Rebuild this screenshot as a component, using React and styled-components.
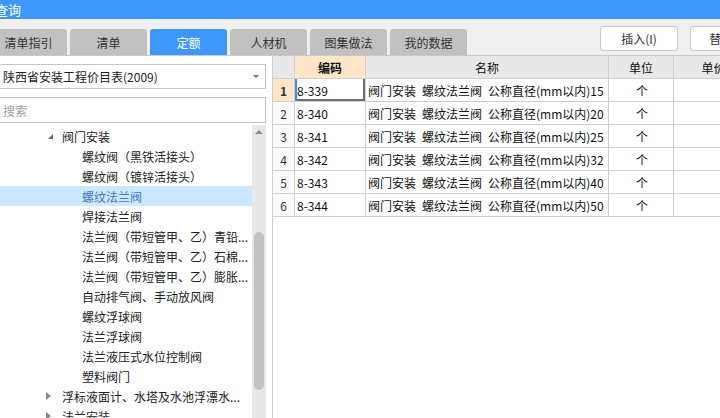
import styled, { createGlobalStyle } from "styled-components";

const GlobalStyle = createGlobalStyle`
  html, body {
    margin: 0;
    padding: 0;
    background: #ffffff;
    overflow: hidden;
  }
  body {
    font-family: "Noto Sans CJK SC", "Noto Sans", sans-serif;
  }
`;

const treeItems = [
  { level: 1, text: "阀门安装", arrow: "open" },
  { level: 2, text: "螺纹阀（黑铁活接头）" },
  { level: 2, text: "螺纹阀（镀锌活接头）" },
  { level: 2, text: "螺纹法兰阀", selected: true },
  { level: 2, text: "焊接法兰阀" },
  { level: 2, text: "法兰阀（带短管甲、乙）青铅..." },
  { level: 2, text: "法兰阀（带短管甲、乙）石棉..." },
  { level: 2, text: "法兰阀（带短管甲、乙）膨胀..." },
  { level: 2, text: "自动排气阀、手动放风阀" },
  { level: 2, text: "螺纹浮球阀" },
  { level: 2, text: "法兰浮球阀" },
  { level: 2, text: "法兰液压式水位控制阀" },
  { level: 2, text: "塑料阀门" },
  { level: 1, text: "浮标液面计、水塔及水池浮漂水...", arrow: "closed" },
  { level: 1, text: "法兰安装", arrow: "closed" },
];

const rows = [
  { code: "8-339", size: "15" },
  { code: "8-340", size: "20" },
  { code: "8-341", size: "25" },
  { code: "8-342", size: "32" },
  { code: "8-343", size: "40" },
  { code: "8-344", size: "50" },
];

const tabs = ["清单指引", "清单", "定额", "人材机", "图集做法", "我的数据"];

const App = () => {
  return (
    <>
      <GlobalStyle />
      <Window>
        <TitleBar>
          <TitleText>查询</TitleText>
        </TitleBar>
        <TabBar>
          <Tabs>
            {tabs.map((t) => (
              <Tab key={t} $active={t === "定额"}>
                {t}
              </Tab>
            ))}
          </Tabs>
          <Buttons>
            <Button>插入(I)</Button>
            <Button>替换(R)</Button>
          </Buttons>
        </TabBar>
        <Main>
          <LeftPanel>
            <Select>
              <span>陕西省安装工程价目表(2009)</span>
              <SelectArrow />
            </Select>
            <Search>搜索</Search>
            <TreeArea>
              <TreeList>
                {treeItems.map((it, i) => (
                  <TreeRow key={i} $selected={it.selected}>
                    <Indent $level={it.level}>
                      {it.arrow === "open" && <OpenArrow />}
                      {it.arrow === "closed" && <ClosedArrow />}
                    </Indent>
                    <TreeText $selected={it.selected}>{it.text}</TreeText>
                  </TreeRow>
                ))}
              </TreeList>
              <ScrollBar>
                <UpArrow />
                <Thumb $top={98} $height={158} />
              </ScrollBar>
            </TreeArea>
          </LeftPanel>
          <Grid>
            <HeadRow>
              <HeadCell />
              <HeadCell $hot>编码</HeadCell>
              <HeadCell>名称</HeadCell>
              <HeadCell>单位</HeadCell>
              <HeadCell>单价</HeadCell>
            </HeadRow>
            {rows.map((r, i) => (
              <Row key={r.code}>
                <NumCell $hot={i === 0}>{i + 1}</NumCell>
                <Cell $active={i === 0}>{r.code}</Cell>
                <Cell>{`阀门安装\u2002螺纹法兰阀\u2002公称直径(mm以内)${r.size}`}</Cell>
                <Cell $center>个</Cell>
                <Cell />
              </Row>
            ))}
          </Grid>
        </Main>
      </Window>
    </>
  );
};

export default App;

const Window = styled.div`
  width: 720px;
  height: 418px;
  overflow: hidden;
  display: flex;
  flex-direction: column;
  background: #ffffff;
`;

const TitleBar = styled.div`
  height: 19px;
  background: #3e97fd;
  display: flex;
  align-items: center;
  flex-shrink: 0;
`;

const TitleText = styled.span`
  color: #ffffff;
  font-size: 13px;
  line-height: 19px;
  margin-left: -5px;
`;

const TabBar = styled.div`
  height: 36px;
  background: #f0f0f0;
  border-bottom: 1px solid #c9c9c9;
  display: flex;
  align-items: flex-start;
  flex-shrink: 0;
  overflow: hidden;
`;

const Tabs = styled.div`
  display: flex;
  gap: 3px;
  margin-top: 10px;
  margin-left: -10px;
  flex-shrink: 0;
`;

const Tab = styled.div`
  width: 77px;
  height: 26px;
  box-sizing: border-box;
  border-radius: 3px 3px 0 0;
  background: ${(p) => (p.$active ? "#3e97fd" : "#c1c1c1")};
  color: ${(p) => (p.$active ? "#ffffff" : "#333333")};
  font-size: 12px;
  display: flex;
  align-items: center;
  justify-content: center;
`;

const Buttons = styled.div`
  display: flex;
  gap: 12px;
  margin-top: 7px;
  margin-left: 133px;
  flex-shrink: 0;
`;

const Button = styled.div`
  width: 78px;
  height: 25px;
  box-sizing: border-box;
  border: 1px solid #c9c9c9;
  border-radius: 3px;
  background: #ffffff;
  color: #333333;
  font-size: 12px;
  display: flex;
  align-items: center;
  justify-content: center;
  flex-shrink: 0;
`;

const Main = styled.div`
  flex: 1;
  display: flex;
  min-height: 0;
`;

const LeftPanel = styled.div`
  width: 266px;
  flex-shrink: 0;
  padding-top: 8px;
  box-sizing: border-box;
  display: flex;
  flex-direction: column;
`;

const Select = styled.div`
  height: 25px;
  margin-left: -1px;
  box-sizing: border-box;
  border: 1px solid #c6c6c6;
  background: #ffffff;
  display: flex;
  align-items: center;
  justify-content: space-between;
  padding: 0 6px 0 3px;
  font-size: 12px;
  color: #222222;
`;

const SelectArrow = styled.span`
  width: 0;
  height: 0;
  border-left: 3px solid transparent;
  border-right: 3px solid transparent;
  border-top: 3px solid #777777;
`;

const Search = styled.div`
  height: 26px;
  margin-top: 8px;
  margin-left: -1px;
  box-sizing: border-box;
  border: 1px solid #c6c6c6;
  display: flex;
  align-items: center;
  padding-left: 3px;
  font-size: 12px;
  color: #a0a0a0;
`;

const TreeArea = styled.div`
  flex: 1;
  margin-top: 2px;
  display: flex;
  min-height: 0;
`;

const TreeList = styled.div`
  width: 252px;
  padding-top: 1px;
  overflow: hidden;
`;

const TreeRow = styled.div`
  height: 20px;
  display: flex;
  align-items: center;
  background: ${(p) => (p.$selected ? "#cce8ff" : "transparent")};
  white-space: nowrap;
`;

const Indent = styled.div`
  width: ${(p) => (p.$level === 1 ? 62 : 82)}px;
  flex-shrink: 0;
  display: flex;
  justify-content: flex-end;
  padding-right: ${(p) => (p.$level === 1 ? 9 : 0)}px;
  box-sizing: border-box;
`;

const OpenArrow = styled.span`
  width: 0;
  height: 0;
  border-left: 5px solid transparent;
  border-bottom: 5px solid #666666;
`;

const ClosedArrow = styled.span`
  width: 0;
  height: 0;
  border-top: 4px solid transparent;
  border-bottom: 4px solid transparent;
  border-left: 5px solid #888888;
  margin-right: 2px;
`;

const TreeText = styled.span`
  font-size: 12px;
  color: ${(p) => (p.$selected ? "#4178bf" : "#222222")};
`;

const ScrollBar = styled.div`
  width: 14px;
  background: #e8e8e8;
  display: flex;
  flex-direction: column;
  align-items: center;
`;

const UpArrow = styled.span`
  margin-top: 5px;
  width: 0;
  height: 0;
  border-left: 4px solid transparent;
  border-right: 4px solid transparent;
  border-bottom: 4px solid #888888;
`;

const Thumb = styled.div`
  width: 10px;
  margin-top: ${(p) => p.$top}px;
  height: ${(p) => p.$height}px;
  border-radius: 5px;
  background: #c2c2c2;
`;

const Grid = styled.div`
  flex: 1;
  margin-left: 6px;
  border-left: 1px solid #cfcfcf;
  font-family: "Noto Sans CJK SC", sans-serif;
  font-size: 12px;
  color: #111111;
`;

const columns = "22px 71px 243px 65px 80px";

const HeadRow = styled.div`
  display: grid;
  grid-template-columns: ${columns};
  height: 23px;
`;

const HeadCell = styled.div`
  box-sizing: border-box;
  border-right: 1px solid #cfcfcf;
  border-bottom: 1px solid #cfcfcf;
  background: ${(p) => (p.$hot ? "#ffe6c7" : "#e8e8e8")};
  font-weight: ${(p) => (p.$hot ? 700 : 400)};
  display: flex;
  align-items: center;
  justify-content: center;
  white-space: nowrap;
  overflow: hidden;
`;

const Row = styled.div`
  display: grid;
  grid-template-columns: ${columns};
  height: 23px;
`;

const NumCell = styled.div`
  box-sizing: border-box;
  border-right: 1px solid #cfcfcf;
  border-bottom: 1px solid #cfcfcf;
  background: ${(p) => (p.$hot ? "#ffe6c7" : "#fafafa")};
  font-weight: ${(p) => (p.$hot ? 700 : 400)};
  color: #333333;
  display: flex;
  align-items: center;
  justify-content: center;
`;

const Cell = styled.div`
  box-sizing: border-box;
  border-right: 1px solid #cfcfcf;
  border-bottom: 1px solid #cfcfcf;
  padding-left: 2px;
  display: flex;
  align-items: center;
  justify-content: ${(p) => (p.$center ? "center" : "flex-start")};
  white-space: nowrap;
  overflow: hidden;
  box-shadow: ${(p) =>
    p.$active ? "inset 2px 0 0 #3c8cf5, inset -2px -2px 0 #707070" : "none"};
`;
